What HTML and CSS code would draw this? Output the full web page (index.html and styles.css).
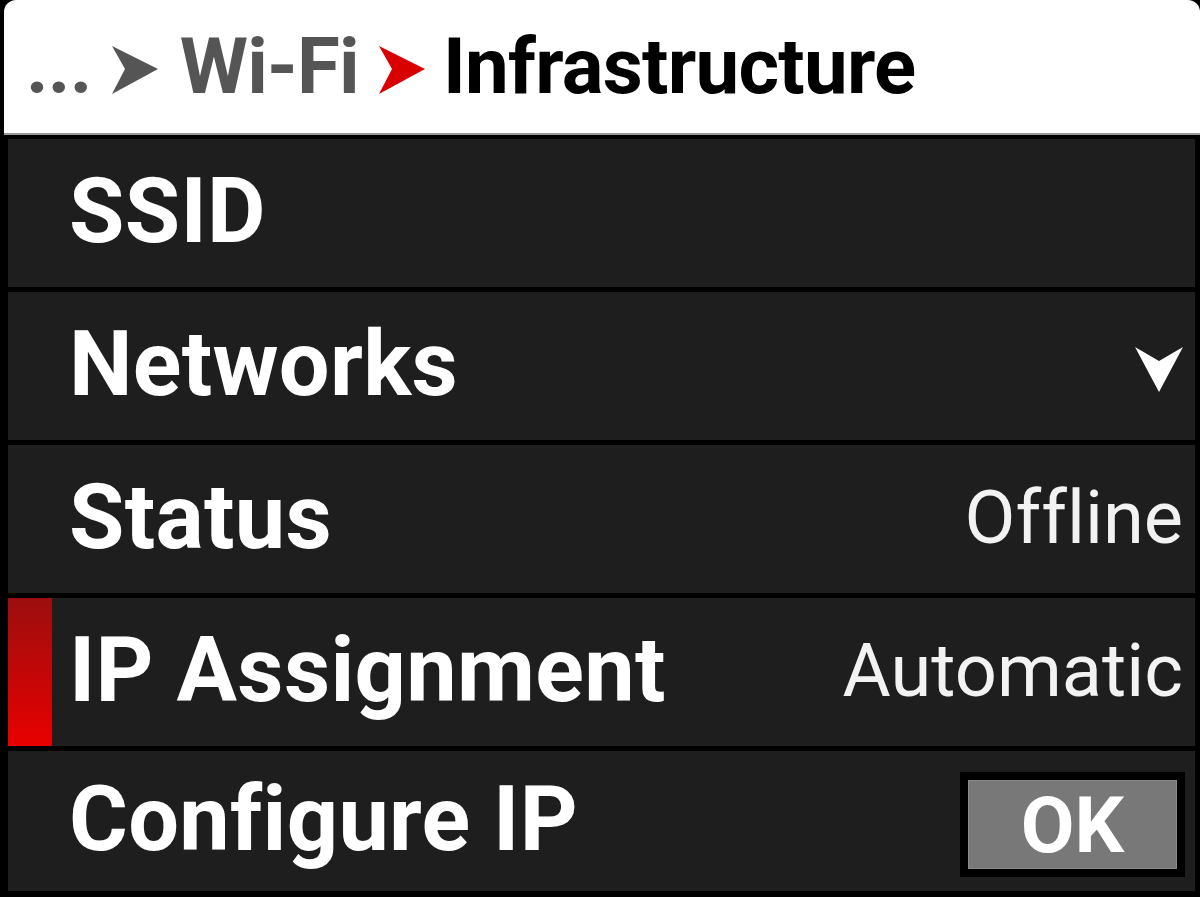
FILE: index.html
```html
<!DOCTYPE html>
<html lang="en">
<head>
    <meta charset="UTF-8">
    <meta name="viewport" content="width=device-width, initial-scale=1.0">
    <title>Infrastructure</title>
    <link rel="stylesheet" href="styles.css">
</head>
<body>
    <div class="screen">
        <div class="header">
            <span class="crumb-dots">...</span>
            <svg class="chev" width="46" height="50" viewBox="0 0 46 50"><path d="M0 1 L46 24 L0 49 L13 24 Z" fill="#555"/></svg>
            <span class="crumb">Wi-Fi</span>
            <svg class="chev chev-red" width="46" height="50" viewBox="0 0 46 50"><path d="M0 1 L46 24 L0 49 L13 24 Z" fill="#d90000"/></svg>
            <span class="title">Infrastructure</span>
        </div>

        <div class="menu">
            <div class="row">
                <span class="marker"></span>
                <span class="label">SSID</span>
            </div>
            <div class="row">
                <span class="marker"></span>
                <span class="label">Networks</span>
                <svg class="dropdown" width="48" height="45" viewBox="0 0 48 45"><path d="M0 0 L24 14 L48 0 L24 45 Z" fill="#fff"/></svg>
            </div>
            <div class="row">
                <span class="marker"></span>
                <span class="label">Status</span>
                <span class="value">Offline</span>
            </div>
            <div class="row selected">
                <span class="marker"></span>
                <span class="label">IP Assignment</span>
                <span class="value">Automatic</span>
            </div>
            <div class="row last">
                <span class="marker"></span>
                <span class="label">Configure IP</span>
                <span class="ok-btn"><span class="ok-inner">OK</span></span>
            </div>
        </div>
    </div>
</body>
</html>
```

FILE: styles.css
```css
body { margin: 0; background: #000; font-family: Roboto, "Liberation Sans", sans-serif; }

.screen {
    width: 1200px;
    height: 897px;
    overflow: hidden;
    background: #000;
}

/* barra del percorso in alto */
.header {
    margin-left: 4px;
    height: 133px;
    background: #fff;
    border-radius: 12px 12px 0 0;
    border-bottom: 2px solid #9a9a9a;
    display: flex;
    align-items: center;
    padding-left: 22px;
    font-weight: 700;
    font-size: 78px;
    letter-spacing: -0.75px;
}
.crumb-dots { color: #555; margin-right: 20px; }
.chev { flex: none; margin-right: 22px; margin-top: 6px; }
.chev-red { margin-right: 18px; }
.crumb { color: #555; margin-right: 20px; }
.title { color: #000; }

.menu {
    display: flex;
    flex-direction: column;
    gap: 5px;
    padding: 4px 5px 0 8px;
}

.row {
    height: 148px;
    background: #1e1e1e;
    display: flex;
    align-items: center;
    padding-right: 12px;
}
.row.last { height: 140px; }

.marker {
    width: 44px;
    align-self: stretch;
    margin-right: 17px;
    flex: none;
}
.row.selected .marker { background: linear-gradient(#9c0e0e, #e80000); }

.label {
    color: #fff;
    font-weight: 700;
    font-size: 90px;
    letter-spacing: 0.3px;
    flex: 1;
    margin-top: -4px;
}
.value {
    color: #f2f2f2;
    font-size: 74px;
    font-variant-ligatures: none;
    margin-top: -4px;
}
.dropdown { flex: none; margin-top: 6px; }

.ok-btn {
    background: #000;
    padding: 8px;
    margin-right: -2px;
    margin-top: 6px;
}
.ok-inner {
    display: block;
    width: 209px;
    height: 89px;
    line-height: 89px;
    background: #787878;
    border: 1px solid #8a8a8a;
    box-sizing: border-box;
    color: #fff;
    font-weight: 700;
    font-size: 78px;
    text-align: center;
}
```
